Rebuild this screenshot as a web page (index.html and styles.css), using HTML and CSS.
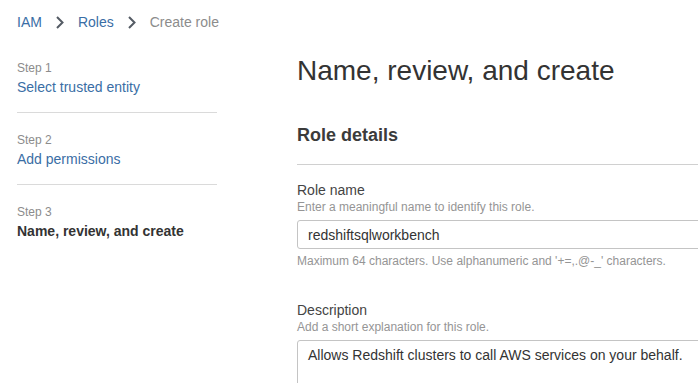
FILE: index.html
```html
<!DOCTYPE html>
<html lang="en">
<head>
    <meta charset="UTF-8">
    <meta name="viewport" content="width=device-width, initial-scale=1.0">
    <title>Create role</title>
<link rel="stylesheet" href="styles.css">
</head>
<body>

<nav class="breadcrumbs">
  <a href="#">IAM</a>
  <svg class="chevron" width="8" height="13" viewBox="0 0 8 13"><path d="M1 1 L6.5 6.5 L1 12" fill="none" stroke="#545b64" stroke-width="2"/></svg>
  <a href="#">Roles</a>
  <svg class="chevron" width="8" height="13" viewBox="0 0 8 13"><path d="M1 1 L6.5 6.5 L1 12" fill="none" stroke="#545b64" stroke-width="2"/></svg>
  <span class="current">Create role</span>
</nav>

<div class="layout">

  <aside class="steps">
    <div class="step">
      <div class="step-num">Step 1</div>
      <a class="step-name" href="#">Select trusted entity</a>
    </div>
    <div class="step">
      <div class="step-num">Step 2</div>
      <a class="step-name" href="#">Add permissions</a>
    </div>
    <div class="step active">
      <div class="step-num">Step 3</div>
      <span class="step-name">Name, review, and create</span>
    </div>
  </aside>

  <main class="content">
    <h1>Name, review, and create</h1>

    <section class="panel">
      <h2>Role details</h2>

      <div class="field">
        <label for="role-name">Role name</label>
        <div class="hint">Enter a meaningful name to identify this role.</div>
        <input id="role-name" type="text" value="redshiftsqlworkbench">
        <div class="note">Maximum 64 characters. Use alphanumeric and '+=,.@-_' characters.</div>
      </div>

      <div class="field">
        <label for="role-desc">Description</label>
        <div class="hint">Add a short explanation for this role.</div>
        <textarea id="role-desc" rows="3">Allows Redshift clusters to call AWS services on your behalf.</textarea>
      </div>
    </section>
  </main>

</div>

</body>
</html>
```

FILE: styles.css
```css
* { box-sizing: border-box }

body {
  margin: 0;
  font-family: "Liberation Sans", Arial, sans-serif;
  font-size: 14px;
  color: #333;
  background: #fff;
  overflow: hidden;
}

a {
  color: #3a6ea5;
  text-decoration: none;
}

/* breadcrumbs */
.breadcrumbs {
  display: flex;
  align-items: center;
  padding: 12px 0 0 17px;
  line-height: 20px;
}

.breadcrumbs .chevron {
  margin: 0 14px;
}

.breadcrumbs .current {
  color: #8c8c8c;
}

/* layout */
.layout {
  display: flex;
  padding-left: 17px;
}

.steps {
  width: 200px;
  flex: none;
  margin-top: 28px;
}

.step {
  padding-bottom: 15px;
  border-bottom: 1px solid #dadada;
  margin-bottom: 19px;
}

.step.active {
  border-bottom: 0;
}

.step-num {
  color: #8c8c8c;
  font-size: 12px;
  line-height: 17px;
}

.step-name {
  display: block;
  line-height: 20px;
}

.step.active .step-name {
  font-weight: bold;
  color: #333;
}

.content {
  margin-left: 80px;
  width: 700px;
  flex: none;
}

h1 {
  margin: 21px 0 0;
  font-size: 28px;
  font-weight: normal;
  line-height: 36px;
  color: #333;
}

h2 {
  margin: 34px 0 0;
  padding-bottom: 17px;
  border-bottom: 1px solid #d0d0d0;
  font-size: 18px;
  line-height: 24px;
  font-weight: bold;
  color: #3b3b3b;
}

.field {
  margin-top: 16px;
}

.field + .field {
  margin-top: 32px;
}

.field label {
  display: block;
  line-height: 18px;
  color: #444;
}

.hint,
.note {
  font-size: 12px;
  line-height: 16px;
  color: #959595;
}

.note {
  margin-top: 4px;
}

input,
textarea {
  display: block;
  width: 100%;
  margin-top: 5px;
  border: 1px solid #c4c4c4;
  border-radius: 3px;
  font-family: "Liberation Sans", Arial, sans-serif;
  font-size: 14px;
  color: #333;
  padding: 4px 10px;
  background: #fff;
}

input {
  height: 29px;
}

textarea {
  line-height: 20px;
  height: 80px;
  resize: none;
}
```
